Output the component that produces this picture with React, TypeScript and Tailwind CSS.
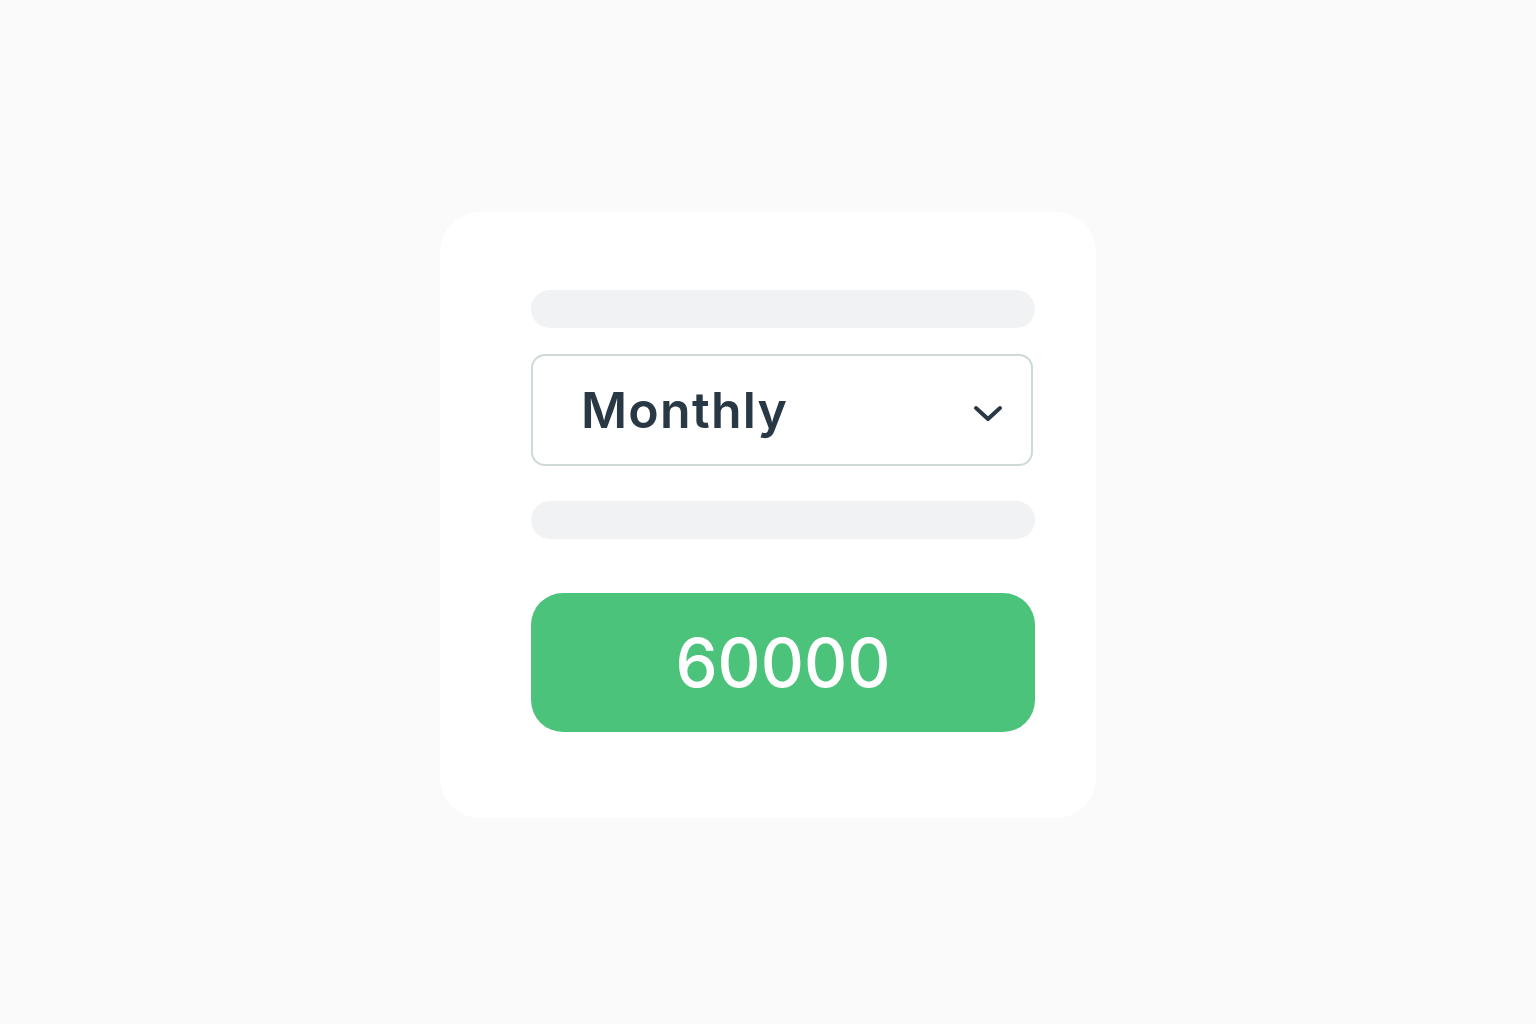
export default function App() {
  return (
    <div className="flex min-h-screen w-full items-center justify-center bg-[#fafafa] font-['Inter',sans-serif]">
      <div className="mt-[6px] flex w-[656px] flex-col rounded-[40px] bg-white pl-[91px] pr-[61px] pt-[78px] pb-[86px]">
        <div className="h-[38px] w-full rounded-full bg-[#f1f2f3]" />
        <div className="mt-[26px] flex h-[112px] w-[502px] items-center justify-between rounded-[14px] border-2 border-[#cfdad7] pl-[48px] pr-[28px]">
          <span className="text-[50px] font-semibold leading-none tracking-[0.025em] text-[#293845]">
            Monthly
          </span>
          <svg className="mt-[6px]" width="30" height="20" viewBox="0 0 30 20" fill="none">
            <path d="M3 5 L15 16 L27 5" stroke="#293845" strokeWidth="4" strokeLinecap="round" strokeLinejoin="round" />
          </svg>
        </div>
        <div className="mt-[35px] h-[38px] w-full rounded-full bg-[#f1f2f3]" />
        <button className="mt-[54px] flex h-[139px] w-full items-center justify-center rounded-[32px] bg-[#4cc37a]">
          <span className="text-[67px] font-medium leading-none text-white">60000</span>
        </button>
      </div>
    </div>
  );
}
